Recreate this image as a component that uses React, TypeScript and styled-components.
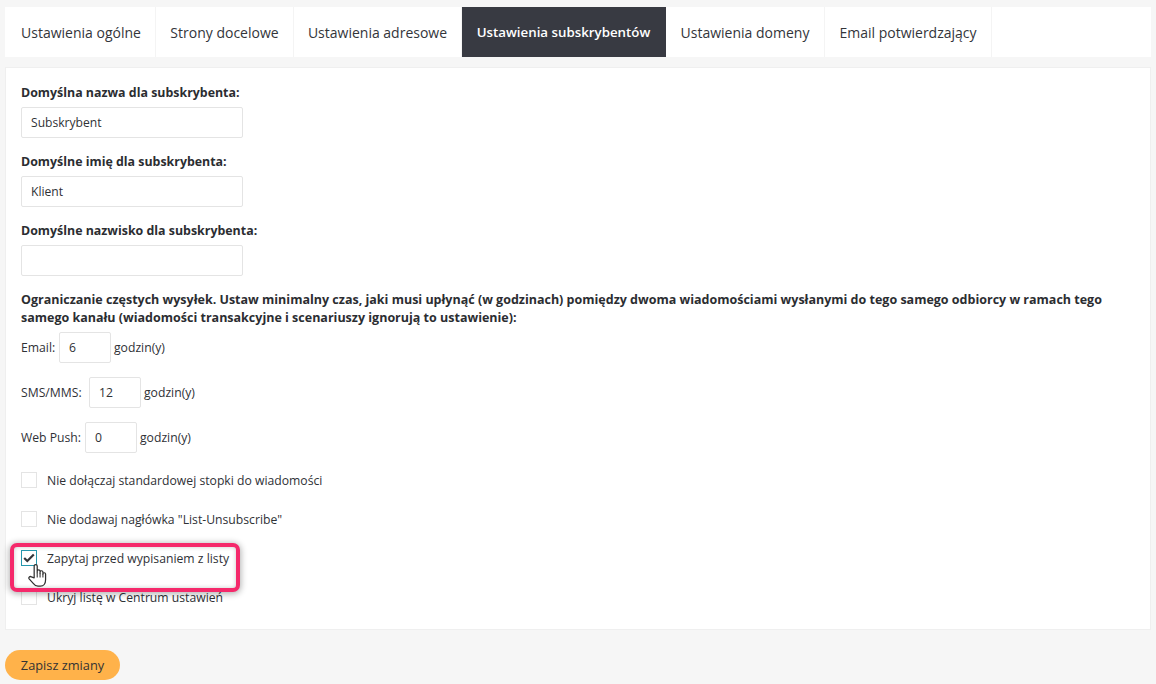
import React from "react";
import styled, { createGlobalStyle } from "styled-components";

const Global = createGlobalStyle`
  html, body { margin: 0; padding: 0; background: #f6f6f6; }
  body { font-family: "Open Sans", "Liberation Sans", sans-serif; font-size: 13px; color: #2f3136; }
`;
const Page = styled.div`
  width: 1156px; height: 684px; box-sizing: border-box; padding: 7px 5px 0; overflow: hidden;
`;
const Tabs = styled.nav`
  display: flex; height: 50px; background: #fff;
`;
const Tab = styled.div<{ $active?: boolean; $w: number }>`
  width: ${p => p.$w}px; box-sizing: border-box; display: flex; align-items: center; justify-content: center;
  font-size: ${p => (p.$active ? "13.3px" : "14px")}; white-space: nowrap;
  background: ${p => (p.$active ? "#383a42" : "#fff")};
  color: ${p => (p.$active ? "#fff" : "#33353a")};
  font-weight: ${p => (p.$active ? 600 : 400)};
  border-right: 1px solid ${p => (p.$active ? "#383a42" : "#f4f4f4")};
  &:first-child { padding-left: 2px; }
`;
const Card = styled.section`
  margin-top: 10px; height: 563px; box-sizing: border-box; background: #fff;
  border: 1px solid #efefef; padding: 15px 15px 0;
`;
const Label = styled.label`
  display: block; font-weight: 700; font-size: 12.4px; line-height: 20px; color: #2b2d31; margin-bottom: 4px;
`;
const Field = styled.div`
  margin-bottom: 14px;
`;
const TextInput = styled.div`
  width: 222px; height: 31px; box-sizing: border-box; border: 1px solid #e4e4e4; border-radius: 2px;
  padding: 0 9px; display: flex; align-items: center; font-size: 12.1px; line-height: 18px; background: #fff;
`;
const Note = styled.p`
  margin: 0 0 5px; padding-top: 1px; width: 1100px; font-weight: 700; font-size: 12.5px; line-height: 18px; color: #2b2d31;
`;
const LimitRow = styled.div`
  display: flex; align-items: center; height: 31px; margin-bottom: 14px; font-size: 12.2px;
`;
const Caption = styled.span<{ $w: number }>`
  width: ${p => p.$w}px; white-space: nowrap;
`;
const NumberInput = styled.div`
  width: 52px; height: 31px; box-sizing: border-box; border: 1px solid #e4e4e4; border-radius: 2px;
  padding: 0 9px; margin: 0 3px; display: flex; align-items: center; font-size: 12.2px;
`;
const CheckList = styled.div`
  margin-top: 19px; display: flex; flex-direction: column; gap: 23px;
`;
const CheckRow = styled.div<{ $highlight?: boolean }>`
  display: flex; align-items: center; gap: 10px; height: 16px; font-size: 12.2px;
  position: relative;
  ${p => p.$highlight && `
    z-index: 2;
    &::before {
      content: ""; position: absolute; z-index: -1; left: -11px; top: -7px; width: 230px; height: 49px;
      box-sizing: border-box; background: #fff; border: 4px solid #f5296b; border-radius: 7px;
      box-shadow: 0 1px 6px 1px rgba(0,0,0,.3), inset 0 0 4px rgba(0,0,0,.22);
    }
  `}
`;
const Box = styled.span<{ $checked?: boolean }>`
  width: 16px; height: 16px; box-sizing: border-box; flex: none; background: #fff;
  border: 1px solid ${p => (p.$checked ? "#2596ad" : "#e4e4e4")};
  display: flex; align-items: center; justify-content: center;
`;
const Cursor = styled.svg`
  position: absolute; left: 7px; top: 13px; width: 19px; height: 25px;
`;
const Save = styled.button`
  display: block; margin-top: 20px; width: 115px; height: 30px; border: 0; border-radius: 15px; background: #ffb24a;
  color: #333; font-family: inherit; font-size: 12.8px; padding: 0;
`;

export default function App() {
  return (
    <Page>
      <Global />
      <Tabs>
        <Tab $w={151}>Ustawienia ogólne</Tab>
        <Tab $w={138}>Strony docelowe</Tab>
        <Tab $w={168}>Ustawienia adresowe</Tab>
        <Tab $w={204} $active>Ustawienia subskrybentów</Tab>
        <Tab $w={159}>Ustawienia domeny</Tab>
        <Tab $w={167}>Email potwierdzający</Tab>
      </Tabs>
      <Card>
        <Field>
          <Label>Domyślna nazwa dla subskrybenta:</Label>
          <TextInput>Subskrybent</TextInput>
        </Field>
        <Field>
          <Label>Domyślne imię dla subskrybenta:</Label>
          <TextInput>Klient</TextInput>
        </Field>
        <Field>
          <Label>Domyślne nazwisko dla subskrybenta:</Label>
          <TextInput />
        </Field>
        <Note>
          Ograniczanie częstych wysyłek. Ustaw minimalny czas, jaki musi upłynąć (w godzinach) pomiędzy dwoma wiadomościami wysłanymi do tego samego odbiorcy w ramach tego samego kanału (wiadomości transakcyjne i scenariuszy ignorują to ustawienie):
        </Note>
        <LimitRow><Caption $w={35}>Email:</Caption><NumberInput>6</NumberInput>godzin(y)</LimitRow>
        <LimitRow><Caption $w={65}>SMS/MMS:</Caption><NumberInput>12</NumberInput>godzin(y)</LimitRow>
        <LimitRow><Caption $w={61}>Web Push:</Caption><NumberInput>0</NumberInput>godzin(y)</LimitRow>
        <CheckList>
          <CheckRow><Box />Nie dołączaj standardowej stopki do wiadomości</CheckRow>
          <CheckRow><Box />Nie dodawaj nagłówka "List-Unsubscribe"</CheckRow>
          <CheckRow $highlight>
            <Box $checked>
              <svg width="12" height="10" viewBox="0 0 12 10">
                <path d="M1.2 5 L4.3 8 L10.8 1.4" fill="none" stroke="#33353a" strokeWidth="2.2" />
              </svg>
            </Box>
            Zapytaj przed wypisaniem z listy
            <Cursor viewBox="0 0 20 25">
              <path d="M6.5 15 V2.6 a1.6 1.6 0 0 1 3.2 0 V10 V8 a1.5 1.5 0 0 1 3 0 V10.5 V9 a1.5 1.5 0 0 1 3 0 V11 a1.4 1.4 0 0 1 2.8 0 V17 c0 4 -2 6.8 -5.5 6.8 H10.5 c-2.5 0 -3.5 -1 -5 -3 L1.2 16 c-1 -1.4 .8 -3.2 2.4 -2 Z" fill="#fff" stroke="#2f2f2f" strokeWidth="1.3" strokeLinejoin="round" />
              <path d="M9.7 10.5 V14.5 M12.7 10.5 V14.5 M15.7 11 V14.5" stroke="#2f2f2f" strokeWidth="1.1" />
            </Cursor>
          </CheckRow>
          <CheckRow><Box />Ukryj listę w Centrum ustawień</CheckRow>
        </CheckList>
      </Card>
      <Save>Zapisz zmiany</Save>
    </Page>
  );
}
